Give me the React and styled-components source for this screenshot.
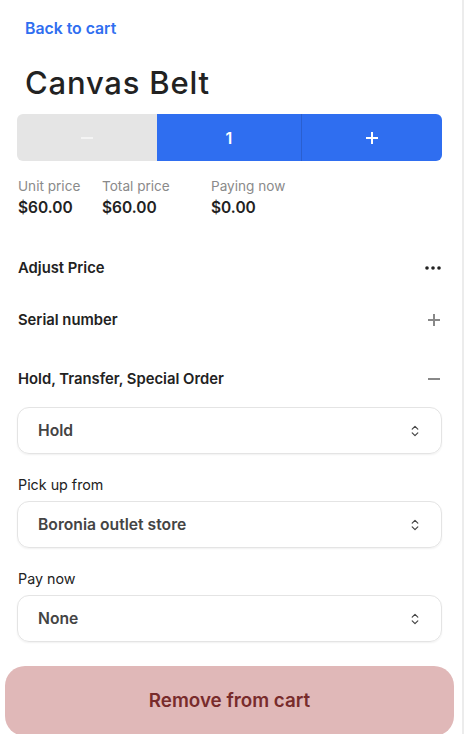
import React from "react";
import styled, { createGlobalStyle } from "styled-components";

const colors = {
  text: "#222222",
  muted: "#8a8a8a",
  blue: "#2f6ef0",
  blueDark: "#2a5fd0",
  gray: "#e5e5e5",
  border: "#e4e4e4",
};

const GlobalStyle = createGlobalStyle`
  html, body {
    margin: 0;
    padding: 0;
    background: #ffffff;
  }
  body {
    font-family: Inter, "Noto Sans", "Liberation Sans", sans-serif;
    color: ${colors.text};
    -webkit-font-smoothing: antialiased;
  }
`;

const Panel = styled.div`
  width: 462px;
  height: 734px;
  border-right: 2px solid #ececec;
  overflow: hidden;
  display: flex;
  flex-direction: column;
`;

const Content = styled.div`
  padding: 20px 20px 0 17px;
  display: flex;
  flex-direction: column;
`;

const BackLink = styled.a`
  display: block;
  margin-left: 8px;
  font-size: 15.8px;
  line-height: 18px;
  font-weight: 600;
  color: ${colors.blue};
  text-decoration: none;
`;

const Title = styled.h1`
  margin: 27px 0 0 8px;
  font-size: 31px;
  line-height: 36px;
  font-weight: 500;
  letter-spacing: 0.8px;
  color: ${colors.text};
`;

const Stepper = styled.div`
  margin-top: 13px;
  height: 47px;
  display: grid;
  grid-template-columns: 140px 144px 1fr;
  border-radius: 6px;
  overflow: hidden;
`;

const StepCell = styled.div`
  display: flex;
  align-items: center;
  justify-content: center;
  background: ${(p) => (p.$disabled ? colors.gray : colors.blue)};
  color: ${(p) => (p.$disabled ? "#f4f4f4" : "#ffffff")};
  border-left: ${(p) => (p.$divider ? `1px solid ${colors.blueDark}` : "none")};
  font-size: 16px;
  font-weight: 600;
`;

const Prices = styled.div`
  margin-top: 17px;
  display: grid;
  grid-template-columns: 84px 109px 1fr;
  padding-left: 1px;
`;

const PriceCol = styled.div`
  display: flex;
  flex-direction: column;
  gap: 5px;
`;

const PriceLabel = styled.span`
  font-size: 13.6px;
  line-height: 16px;
  color: ${colors.muted};
`;

const PriceValue = styled.span`
  font-size: 15.5px;
  line-height: 18px;
  font-weight: 600;
  color: ${colors.text};
`;

const SectionRow = styled.div`
  height: ${(p) => p.$h}px;
  margin-top: ${(p) => p.$mt}px;
  display: flex;
  align-items: center;
  justify-content: space-between;
  padding: 0 1px;
`;

const SectionTitle = styled.span`
  font-size: 14.8px;
  font-weight: 600;
  color: ${colors.text};
`;

const FieldLabel = styled.div`
  margin-top: ${(p) => p.$mt}px;
  font-size: 14.3px;
  line-height: 18px;
  color: ${colors.text};
  padding-left: 1px;
`;

const Select = styled.div`
  margin-top: ${(p) => p.$mt}px;
  height: 47px;
  box-sizing: border-box;
  border: 1px solid ${colors.border};
  border-radius: 12px;
  box-shadow: 0 1px 2px rgba(0, 0, 0, 0.06);
  display: flex;
  align-items: center;
  justify-content: space-between;
  padding: 0 22px 0 20px;
  font-size: 15.7px;
  font-weight: 600;
  color: #444444;
`;

const Footer = styled.div`
  padding: 24px 8px 0 5px;
`;

const RemoveButton = styled.button`
  width: 100%;
  height: 70px;
  border: none;
  border-radius: 20px;
  background: #e0b8b8;
  color: #782b2b;
  font-family: inherit;
  font-size: 18.8px;
  font-weight: 600;
  padding-bottom: 2px;
`;

const Dots = () => (
  <svg width="16" height="4" viewBox="0 0 16 4">
    <circle cx="2" cy="2" r="1.8" fill="#222" />
    <circle cx="8" cy="2" r="1.8" fill="#222" />
    <circle cx="14" cy="2" r="1.8" fill="#222" />
  </svg>
);

const Plus = ({ color = "#888", size = 14 }) => (
  <svg width={size} height={size} viewBox="0 0 14 14">
    <path d="M7 1v12M1 7h12" stroke={color} strokeWidth="2" />
  </svg>
);

const Minus = ({ color = "#888", size = 14 }) => (
  <svg width={size} height={size} viewBox="0 0 14 14">
    <path d="M1 7h12" stroke={color} strokeWidth="2" />
  </svg>
);

const UpDown = () => (
  <svg width="8" height="12" viewBox="0 0 8 12">
    <path
      d="M1.2 4.2L4 1.4l2.8 2.8M1.2 7.8L4 10.6l2.8-2.8"
      fill="none"
      stroke="#444"
      strokeWidth="1.2"
      strokeLinecap="round"
      strokeLinejoin="round"
    />
  </svg>
);

const prices = [
  { label: "Unit price", value: "$60.00" },
  { label: "Total price", value: "$60.00" },
  { label: "Paying now", value: "$0.00" },
];

export default function App() {
  return (
    <>
      <GlobalStyle />
      <Panel>
        <Content>
          <BackLink href="#">Back to cart</BackLink>
          <Title>Canvas Belt</Title>

          <Stepper>
            <StepCell $disabled>
              <Minus color="#f4f4f4" size={14} />
            </StepCell>
            <StepCell>1</StepCell>
            <StepCell $divider>
              <Plus color="#ffffff" size={14} />
            </StepCell>
          </Stepper>

          <Prices>
            {prices.map((p) => (
              <PriceCol key={p.label}>
                <PriceLabel>{p.label}</PriceLabel>
                <PriceValue>{p.value}</PriceValue>
              </PriceCol>
            ))}
          </Prices>

          <SectionRow $h={52} $mt={25}>
            <SectionTitle>Adjust Price</SectionTitle>
            <Dots />
          </SectionRow>
          <SectionRow $h={52} $mt={0}>
            <SectionTitle>Serial number</SectionTitle>
            <Plus />
          </SectionRow>
          <SectionRow $h={52} $mt={7}>
            <SectionTitle>Hold, Transfer, Special Order</SectionTitle>
            <Minus />
          </SectionRow>

          <Select $mt={2}>
            <span>Hold</span>
            <UpDown />
          </Select>

          <FieldLabel $mt={22}>Pick up from</FieldLabel>
          <Select $mt={7}>
            <span>Boronia outlet store</span>
            <UpDown />
          </Select>

          <FieldLabel $mt={22}>Pay now</FieldLabel>
          <Select $mt={7}>
            <span>None</span>
            <UpDown />
          </Select>
        </Content>
        <Footer>
          <RemoveButton>Remove from cart</RemoveButton>
        </Footer>
      </Panel>
    </>
  );
}
